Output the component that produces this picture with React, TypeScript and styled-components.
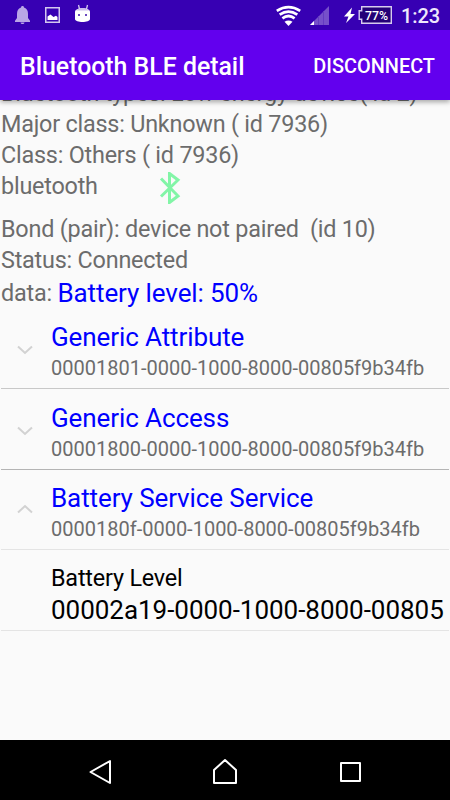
import React from "react";
import styled, { createGlobalStyle } from "styled-components";

const GlobalStyle = createGlobalStyle`
  * { box-sizing: border-box; }
  body { margin: 0; background: #fafafa; }
`;

const Screen = styled.div`
  width: 450px;
  height: 800px;
  display: flex;
  flex-direction: column;
  overflow: hidden;
  background: #fafafa;
  font-family: Roboto, sans-serif;
  color: #6c6c6c;
`;

const StatusBar = styled.div`
  height: 30px;
  flex: none;
  display: flex;
  justify-content: space-between;
  background: #3700b3;
  color: #fff;
  z-index: 2;
`;

const AppBar = styled.header`
  height: 70px;
  flex: none;
  display: flex;
  align-items: center;
  justify-content: space-between;
  padding: 3px 15px 0 20px;
  background: #6200ee;
  color: #fff;
  box-shadow: 0 2px 5px rgba(0, 0, 0, 0.35);
  z-index: 1;
`;

const Title = styled.h1`
  margin: 0;
  font-size: 24.85px;
  font-weight: 500;
  line-height: 30px;
  white-space: nowrap;
`;

const Action = styled.button`
  border: 0;
  padding: 0;
  background: none;
  color: #fff;
  font: 500 19.9px/24px Roboto, sans-serif;
  white-space: nowrap;
`;

const Content = styled.main`
  flex: 1;
  min-height: 0;
`;

const Details = styled.section`
  margin-top: -22px;
  padding-left: 1px;
  height: 230.5px;
`;

const Line = styled.div<{ $height?: number }>`
  height: ${(p) => p.$height ?? 31}px;
  line-height: 31px;
  font-size: 23.4px;
  letter-spacing: -0.22px;
  white-space: pre;
  display: flex;
`;

const BluetoothMark = styled.svg`
  margin: 1px 0 0 53px;
`;

const DataValue = styled.span`
  font-size: 26px;
  letter-spacing: -0.1px;
  color: #0000ff;
`;

const Service = styled.div<{ $border: string }>`
  height: 80.5px;
  margin: 0 1px;
  display: grid;
  grid-template-columns: 50px 1fr;
  border-bottom: 1px solid ${(p) => p.$border};
`;

const Chevron = styled.svg<{ $open: boolean }>`
  margin: ${(p) => (p.$open ? 34 : 36.5)}px 0 0 15px;
`;

const Names = styled.div`
  padding-top: 12.5px;
  white-space: nowrap;
`;

const ServiceName = styled.div`
  font-size: 26px;
  letter-spacing: -0.1px;
  line-height: 33px;
  color: #0000ff;
`;

const Uuid = styled.div`
  font-size: 20px;
  line-height: 28px;
`;

const CharacteristicName = styled.div`
  font-size: 23.4px;
  letter-spacing: -0.2px;
  line-height: 30px;
  color: #000;
`;

const CharacteristicUuid = styled.div`
  font-size: 26px;
  letter-spacing: -0.03px;
  line-height: 34px;
  color: #000;
`;

const NavBar = styled.nav`
  height: 60px;
  flex: none;
  background: #000;
`;

const services = [
  { name: "Generic Attribute", uuid: "00001801-0000-1000-8000-00805f9b34fb", open: false, border: "#c8c8c8" },
  { name: "Generic Access", uuid: "00001800-0000-1000-8000-00805f9b34fb", open: false, border: "#b4b4b4" },
  { name: "Battery Service Service", uuid: "0000180f-0000-1000-8000-00805f9b34fb", open: true, border: "#e4e4e4" },
];

const NotificationIcons = () => (
  <svg width="110" height="30" viewBox="0 0 110 30">
    <path d="M22.5 6c1 0 1.5.7 1.5 1.5C27 8.500 28 11 28 14v4l2 2.700V22H15v-1.300L17 18v-4c0-3 1-5.500 4-6.500C21 6.700 21.500 6 22.500 6zM20.500 22.500h4c-.3 2-3.700 2-4 0z" fill="#b9a6e6" />
    <rect x="45.750" y="7.750" width="13.500" height="14.500" fill="none" stroke="#d3c7ef" strokeWidth="1.500" />
    <path d="M47.500 20v-3.500l3-2 3 2.500 2.500-1.200 1.500 1.200v3z" fill="#fff" />
    <path d="M78.500 5l1 4M87.500 5l-1 4" stroke="#d3c7ef" strokeWidth="1.300" />
    <path d="M75 12c0-5 15-5 15 0v7c0 4-15 4-15 0z" fill="#fff" />
    <path d="M76 10.500c2-3.500 11-3.500 13 0z" fill="#cbbdec" />
    <path d="M78 14h2v2h-2zM85 14h2v2h-2z" fill="#6b48c0" />
  </svg>
);

const SystemIcons = () => (
  <svg width="190" height="30" viewBox="0 0 190 30" fontFamily="Roboto, sans-serif">
    <g fill="none" stroke="#fff" strokeWidth="2.700">
      <path d="M16.800 10.800q11.700-7.400 23.400 0" />
      <path d="M19.700 14.700q8.800-6.200 17.600 0" />
      <path d="M22.400 18.300q6.100-4.600 12.200 0" />
    </g>
    <path d="M24.500 21.800q4-2.800 8 0l-4 4.200z" fill="#fff" />
    <path d="M50 25L69 6v19z" fill="#7650ca" />
    <path d="M50 25l4-4v4z" fill="#fff" />
    <path d="M58.500 16v9M63.500 11v14" stroke="#643bc2" />
    <path d="M92 7.500l-8 9h4.500l-2.500 6.500 9-9h-4.500z" fill="#fff" />
    <path d="M101.700 6.700h29.600v16.600h-29.600v-4h-2.500v-8.500h2.500z" fill="#240077" stroke="#d6cbef" strokeWidth="1.400" />
    <text x="105" y="19.500" fontSize="12.800" fontWeight="500" fill="#fff" textLength="23" lengthAdjust="spacingAndGlyphs">77%</text>
    <text x="141" y="22.500" fontSize="20" fontWeight="500" fill="#eee8fc" textLength="39">1:23</text>
  </svg>
);

export default function App() {
  return (
    <Screen>
      <GlobalStyle />
      <StatusBar>
        <NotificationIcons />
        <SystemIcons />
      </StatusBar>
      <AppBar>
        <Title>Bluetooth BLE detail</Title>
        <Action>DISCONNECT</Action>
      </AppBar>
      <Content>
        <Details>
          <Line>Bluetooth types: Low energy device( id 2)</Line>
          <Line>Major class: Unknown ( id 7936)</Line>
          <Line>Class: Others ( id 7936)</Line>
          <Line $height={43}>
            bluetooth
            <BluetoothMark width="38" height="32" viewBox="0 0 38 32">
              <path d="M10 6.500l17 17.500-8.500 6.500V1.500L27 8 10 24.500" fill="none" stroke="#82f5a7" strokeWidth="3" />
            </BluetoothMark>
          </Line>
          <Line>{"Bond (pair): device not paired  (id 10)"}</Line>
          <Line $height={33}>Status: Connected</Line>
          <Line>
            {"data: "}
            <DataValue>Battery level: 50%</DataValue>
          </Line>
        </Details>
        {services.map((s) => (
          <Service key={s.uuid} $border={s.border}>
            <Chevron $open={s.open} width="20" height="10" viewBox="0 0 20 10">
              <path d={s.open ? "M2 8.500l7-6.500 7 6.500" : "M2 1.500L9 8l7-6.500"} fill="none" stroke="#d2d2d2" strokeWidth="2" />
            </Chevron>
            <Names>
              <ServiceName>{s.name}</ServiceName>
              <Uuid>{s.uuid}</Uuid>
            </Names>
          </Service>
        ))}
        <Service $border="#e4e4e4">
          <span />
          <Names>
            <CharacteristicName>Battery Level</CharacteristicName>
            <CharacteristicUuid>00002a19-0000-1000-8000-00805</CharacteristicUuid>
          </Names>
        </Service>
      </Content>
      <NavBar>
        <svg width="450" height="60" viewBox="0 0 450 60" fill="none" stroke="#fff" strokeWidth="2" strokeLinejoin="round">
          <path d="M90.500 32L110 21v22z" />
          <path d="M225 20l11 10v13h-22V30z" />
          <rect x="341" y="23" width="19" height="18" />
        </svg>
      </NavBar>
    </Screen>
  );
}
